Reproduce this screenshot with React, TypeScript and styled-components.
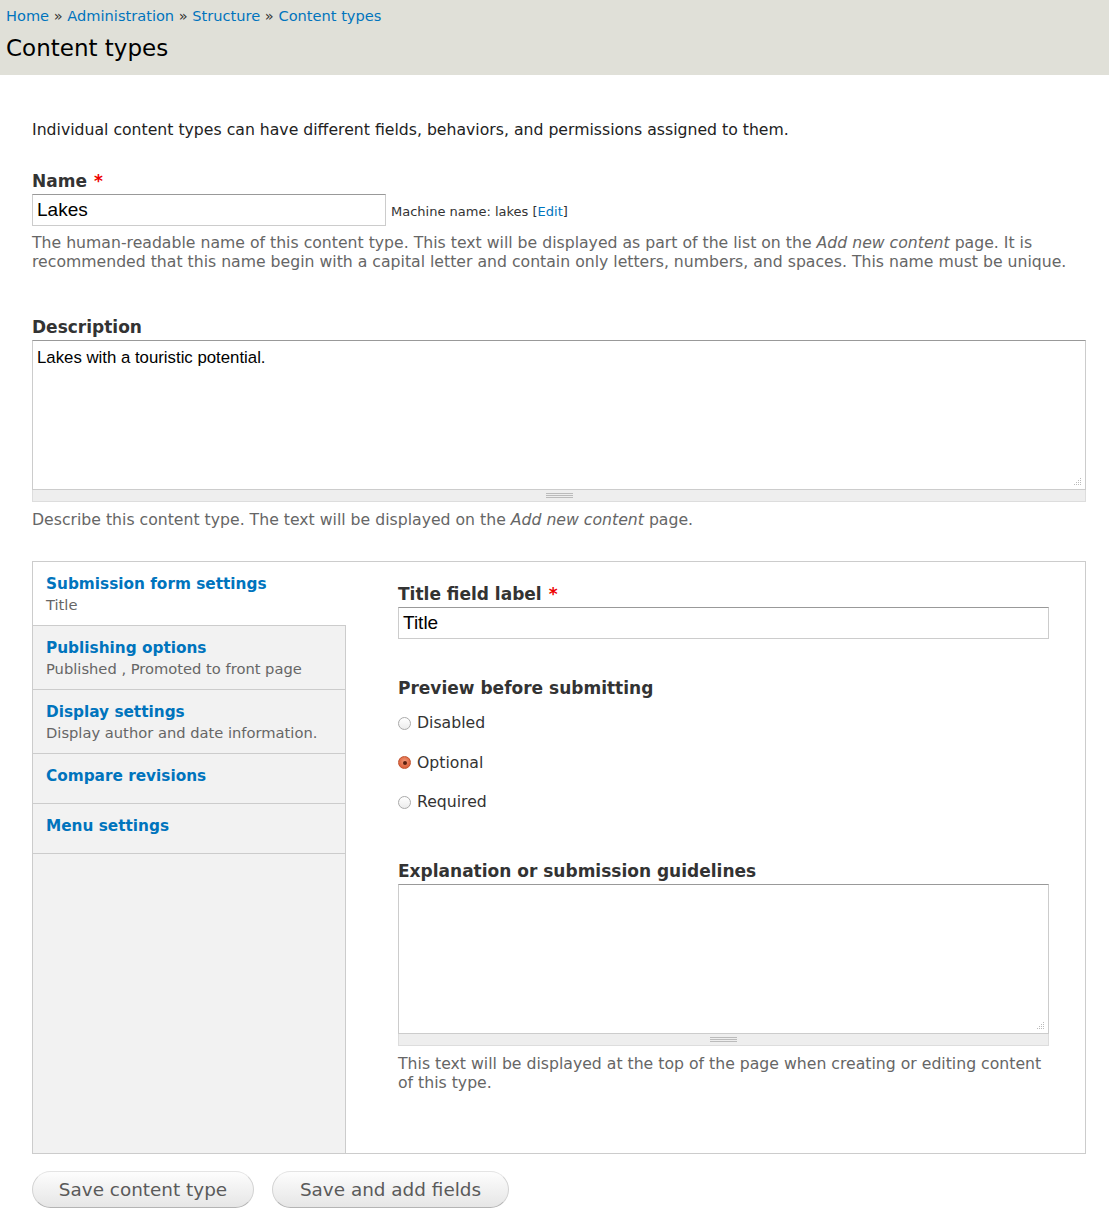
import React from "react";
import styled, { createGlobalStyle } from "styled-components";

const Global = createGlobalStyle`
  html, body { margin: 0; padding: 0; background: #fff; }
  body { font-family: "DejaVu Sans", Verdana, sans-serif; color: #333; font-size: 15.7px; }
  * { box-sizing: border-box; }
`;

const Header = styled.header`
  background: #e0e0d8;
  height: 75px;
  padding: 6px 6px 0 6px;
`;

const Breadcrumb = styled.nav`
  font-size: 14.6px;
  line-height: 20px;
  color: #333;
  a { color: #0074bd; text-decoration: none; }
`;

const Title = styled.h1`
  margin: 7px 0 0 0;
  font-weight: normal;
  font-size: 23px;
  line-height: 30px;
  color: #000;
`;

const Main = styled.main`
  padding: 0 23px 0 32px;
`;

const Intro = styled.p`
  margin: 45px 0 0 0;
  line-height: 20px;
  color: #222;
`;

const Label = styled.label<{ $top: number }>`
  display: block;
  margin-top: ${(p) => p.$top}px;
  font-weight: bold;
  font-size: 17px;
  line-height: 22px;
  color: #333;
`;

const Req = styled.span`
  color: #e00;
  margin-left: 7px;
`;

const InputRow = styled.div`
  display: flex;
  align-items: center;
  gap: 5px;
  margin-top: 2px;
`;

const TextInput = styled.div<{ $width: number }>`
  width: ${(p) => p.$width}px;
  height: 32px;
  border: 1px solid #ccc;
  border-top-color: #999;
  padding: 0 4px;
  display: flex;
  align-items: center;
  font-family: "Liberation Sans", Arial, sans-serif;
  font-size: 19px;
  color: #000;
  background: #fff;
`;

const Machine = styled.span`
  font-size: 13px;
  color: #333;
  padding-top: 3px;
  a { color: #0074bd; text-decoration: none; }
`;

const Desc = styled.div<{ $top: number }>`
  margin-top: ${(p) => p.$top}px;
  font-size: 15.7px;
  line-height: 19px;
  color: #666;
`;

const AreaWrap = styled.div<{ $width?: number }>`
  margin-top: 2px;
  width: ${(p) => (p.$width ? `${p.$width}px` : "100%")};
`;

const Area = styled.div`
  position: relative;
  height: 150px;
  border: 1px solid #ccc;
  border-top-color: #999;
  padding: 7px 4px;
  font-family: "Liberation Sans", Arial, sans-serif;
  font-size: 16.8px;
  line-height: 20px;
  color: #000;
  background: #fff;
`;

const Corner = styled.svg`
  position: absolute;
  right: 3px;
  bottom: 3px;
`;

const Grippie = styled.div`
  height: 12px;
  background: #eee;
  border: 1px solid #ddd;
  border-top: none;
  display: flex;
  align-items: center;
  justify-content: center;
`;

const GripLines = styled.div`
  width: 27px;
  height: 5px;
  border-top: 1px solid #bbb;
  border-bottom: 1px solid #bbb;
  position: relative;
  &::after {
    content: "";
    position: absolute;
    left: 0;
    right: 0;
    top: 1px;
    border-top: 1px solid #bbb;
  }
`;

const Tabs = styled.div`
  margin-top: 32px;
  display: flex;
  border: 1px solid #ccc;
  height: 593px;
  background: #fff;
`;

const Menu = styled.ul`
  list-style: none;
  margin: 0;
  padding: 0;
  width: 313px;
  flex: none;
  background: #f2f2f2;
  border-right: 1px solid #ccc;
`;

const MenuItem = styled.li<{ $active?: boolean; $single?: boolean }>`
  padding: 12px 13px ${(p) => (p.$single ? "17px" : "9px")};
  border-bottom: 1px solid #ccc;
  background: ${(p) => (p.$active ? "#fff" : "transparent")};
  margin-right: ${(p) => (p.$active ? "-1px" : "0")};
`;

const MenuTitle = styled.a`
  display: block;
  font-weight: bold;
  font-size: 15.3px;
  line-height: 20px;
  color: #0074bd;
  text-decoration: none;
`;

const MenuSummary = styled.div`
  font-size: 14.7px;
  line-height: 22px;
  color: #666;
`;

const Pane = styled.div`
  flex: 1;
  padding: 21px 37px 0 52px;
`;

const RadioList = styled.div`
  margin-top: 14px;
  display: flex;
  flex-direction: column;
  gap: 19.5px;
`;

const RadioRow = styled.div`
  display: flex;
  align-items: center;
  gap: 6px;
  font-size: 15.7px;
  line-height: 20px;
  color: #333;
`;

const RadioDot = styled.span<{ $checked?: boolean }>`
  width: 13px;
  height: 13px;
  border-radius: 50%;
  flex: none;
  position: relative;
  border: 1px solid ${(p) => (p.$checked ? "#c0532f" : "#aaa")};
  background: ${(p) =>
    p.$checked
      ? "radial-gradient(circle at 50% 40%, #f29a7a 0%, #e06a45 60%, #cf5631 100%)"
      : "linear-gradient(#fff, #ececec)"};
  &::after {
    content: "";
    display: ${(p) => (p.$checked ? "block" : "none")};
    position: absolute;
    width: 4px;
    height: 4px;
    border-radius: 50%;
    background: #5a2010;
    left: 3.5px;
    top: 3.5px;
  }
`;

const Buttons = styled.div`
  display: flex;
  gap: 18px;
  margin-top: 17px;
  padding-bottom: 10px;
`;

const Button = styled.button<{ $width: number }>`
  width: ${(p) => p.$width}px;
  height: 37px;
  border-radius: 20px;
  border: 1px solid #d2d2d2;
  border-top-color: #e4e4e4;
  border-bottom-color: #b4b4b4;
  background: linear-gradient(#fdfdfd, #e6e6e6);
  font-family: "DejaVu Sans", Verdana, sans-serif;
  font-size: 18.4px;
  color: #5a5a5a;
  padding: 0;
`;

const ResizeCorner = () => (
  <Corner width="9" height="9" viewBox="0 0 9 9">
    <g fill="#bbb">
      <rect x="7" y="1" width="1" height="1" />
      <rect x="7" y="3" width="1" height="1" />
      <rect x="5" y="3" width="1" height="1" />
      <rect x="7" y="5" width="1" height="1" />
      <rect x="5" y="5" width="1" height="1" />
      <rect x="3" y="5" width="1" height="1" />
      <rect x="7" y="7" width="1" height="1" />
      <rect x="5" y="7" width="1" height="1" />
      <rect x="3" y="7" width="1" height="1" />
      <rect x="1" y="7" width="1" height="1" />
    </g>
  </Corner>
);

const TextArea = ({ text, width }: { text?: string; width?: number }) => (
  <AreaWrap $width={width}>
    <Area>
      {text}
      <ResizeCorner />
    </Area>
    <Grippie>
      <GripLines />
    </Grippie>
  </AreaWrap>
);

const menu = [
  { title: "Submission form settings", summary: "Title", active: true },
  { title: "Publishing options", summary: "Published , Promoted to front page" },
  { title: "Display settings", summary: "Display author and date information." },
  { title: "Compare revisions" },
  { title: "Menu settings" },
];

export default function App() {
  return (
    <>
      <Global />
      <Header>
        <Breadcrumb>
          <a href="#">Home</a> » <a href="#">Administration</a> » <a href="#">Structure</a> »{" "}
          <a href="#">Content types</a>
        </Breadcrumb>
        <Title>Content types</Title>
      </Header>
      <Main>
        <Intro>
          Individual content types can have different fields, behaviors, and permissions assigned to them.
        </Intro>
        <Label $top={30}>
          Name<Req>*</Req>
        </Label>
        <InputRow>
          <TextInput $width={354}>Lakes</TextInput>
          <Machine>
            Machine name: lakes [<a href="#">Edit</a>]
          </Machine>
        </InputRow>
        <Desc $top={7}>
          The human-readable name of this content type. This text will be displayed as part of the list on the{" "}
          <em>Add new content</em> page. It is recommended that this name begin with a capital letter and contain
          only letters, numbers, and spaces. This name must be unique.
        </Desc>
        <Label $top={45}>Description</Label>
        <TextArea text="Lakes with a touristic potential." />
        <Desc $top={8}>
          Describe this content type. The text will be displayed on the <em>Add new content</em> page.
        </Desc>
        <Tabs>
          <Menu>
            {menu.map((m) => (
              <MenuItem key={m.title} $active={m.active} $single={!m.summary}>
                <MenuTitle href="#">{m.title}</MenuTitle>
                {m.summary && <MenuSummary>{m.summary}</MenuSummary>}
              </MenuItem>
            ))}
          </Menu>
          <Pane>
            <Label $top={0}>
              Title field label<Req>*</Req>
            </Label>
            <InputRow>
              <TextInput $width={651}>Title</TextInput>
            </InputRow>
            <Label $top={38}>Preview before submitting</Label>
            <RadioList>
              <RadioRow>
                <RadioDot />
                Disabled
              </RadioRow>
              <RadioRow>
                <RadioDot $checked />
                Optional
              </RadioRow>
              <RadioRow>
                <RadioDot />
                Required
              </RadioRow>
            </RadioList>
            <Label $top={48}>Explanation or submission guidelines</Label>
            <TextArea width={651} />
            <Desc $top={8}>
              This text will be displayed at the top of the page when creating or editing content of this type.
            </Desc>
          </Pane>
        </Tabs>
        <Buttons>
          <Button $width={222}>Save content type</Button>
          <Button $width={237}>Save and add fields</Button>
        </Buttons>
      </Main>
    </>
  );
}
